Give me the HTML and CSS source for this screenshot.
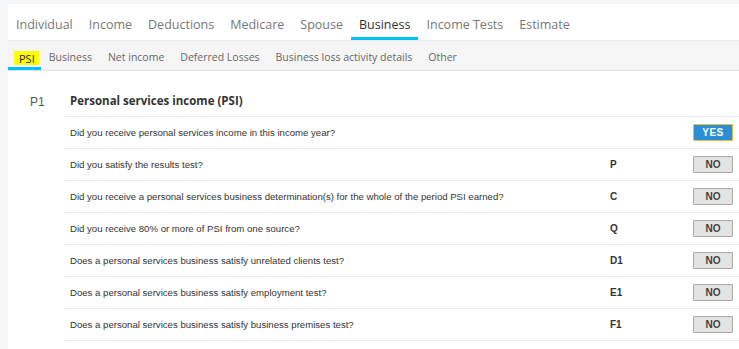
FILE: index.html
```html
<!DOCTYPE html>
<html lang="en">
<head>
    <meta charset="UTF-8">
    <title>Business - PSI</title>
    <link rel="stylesheet" href="styles.css">
</head>
<body>
<div class="panel">
    <nav class="tabs">
        <a class="tab">Individual</a>
        <a class="tab">Income</a>
        <a class="tab">Deductions</a>
        <a class="tab">Medicare</a>
        <a class="tab">Spouse</a>
        <a class="tab active">Business</a>
        <a class="tab">Income Tests</a>
        <a class="tab">Estimate</a>
    </nav>
    <nav class="subtabs">
        <a class="subtab active"><span class="mark">PSI</span></a>
        <a class="subtab">Business</a>
        <a class="subtab">Net income</a>
        <a class="subtab">Deferred Losses</a>
        <a class="subtab">Business loss activity details</a>
        <a class="subtab">Other</a>
    </nav>

    <section class="section">
        <div class="label">P1</div>
        <div class="rows">
            <div class="head">Personal services income (PSI)</div>
            <div class="row">
                <span class="question">Did you receive personal services income in this income year?</span>
                <span class="code"></span>
                <button class="btn yes">YES</button>
            </div>
            <div class="row">
                <span class="question">Did you satisfy the results test?</span>
                <span class="code">P</span>
                <button class="btn">NO</button>
            </div>
            <div class="row">
                <span class="question">Did you receive a personal services business determination(s) for the whole of the period PSI earned?</span>
                <span class="code">C</span>
                <button class="btn">NO</button>
            </div>
            <div class="row">
                <span class="question">Did you receive 80% or more of PSI from one source?</span>
                <span class="code">Q</span>
                <button class="btn">NO</button>
            </div>
            <div class="row">
                <span class="question">Does a personal services business satisfy unrelated clients test?</span>
                <span class="code">D1</span>
                <button class="btn">NO</button>
            </div>
            <div class="row">
                <span class="question">Does a personal services business satisfy employment test?</span>
                <span class="code">E1</span>
                <button class="btn">NO</button>
            </div>
            <div class="row">
                <span class="question">Does a personal services business satisfy business premises test?</span>
                <span class="code">F1</span>
                <button class="btn">NO</button>
            </div>
        </div>
    </section>
</div>
</body>
</html>
```

FILE: styles.css
```css
html, body {
    margin: 0;
    padding: 0;
}

* {
    box-sizing: border-box;
}

body {
    background-color: #f5f6f8;
    font-family: "Open Sans", sans-serif;
    padding: 4px 0 0 8px;
    height: 349px;
    overflow: hidden;
}

.panel {
    background-color: #fff;
    min-height: 400px;
}

.tabs {
    display: flex;
    height: 37px;
    border-bottom: 1px solid #ececec;
}

.tab {
    padding: 12px 8px 0 8px;
    font-size: 12.5px;
    color: #777;
    border-bottom: 3px solid transparent;
}

.tab.active {
    color: #333;
    border-bottom-color: #00bfff;
}

.subtabs {
    display: flex;
    height: 30px;
    background-color: #f5f5f5;
    border-bottom: 1px solid #e3e3e3;
}

.subtab {
    padding: 9px 8px 0 8px;
    font-size: 10.5px;
    color: #666;
    border-bottom: 3px solid transparent;
}

.subtab.active {
    color: #222;
    border-bottom-color: #00bfff;
    padding: 8px 2px 0 6px;
}

.mark {
    display: inline-block;
    background-color: #ffff00;
    padding: 1px 4px 0 5px;
    height: 14px;
    line-height: 13px;
    margin-top: 2px;
    font-size: 11px;
}

.section {
    display: flex;
    padding-top: 16px;
}

.label {
    width: 56px;
    padding: 8px 0 0 22px;
    font-family: "Liberation Sans", Arial, sans-serif;
    font-size: 12px;
    color: #555;
}

.rows {
    flex: 1;
}

.head {
    height: 30px;
    padding: 6px 0 0 6px;
    font-size: 11.5px;
    font-weight: bold;
    color: #333;
    border-bottom: 1px solid #ebebeb;
}

.row {
    display: flex;
    align-items: center;
    height: 32px;
    padding-left: 6px;
    border-bottom: 1px solid #ebebeb;
    font-family: "Liberation Sans", Arial, sans-serif;
    font-size: 9.6px;
    color: #333;
}

.question {
    width: 540px;
}

.code {
    flex: 1;
    font-size: 10px;
    font-weight: bold;
    color: #333;
}

.btn {
    width: 40px;
    height: 17px;
    margin-right: 6px;
    padding: 0;
    font-family: "Liberation Sans", Arial, sans-serif;
    font-size: 10px;
    font-weight: bold;
    color: #444;
    background-color: #e3e3e3;
    border: 1px solid #a9a9a9;
    border-radius: 1px;
}

.btn.yes {
    color: #fff;
    background-color: #2b8fd6;
    border-color: #f5b73b;
    letter-spacing: 0.5px;
}
```
